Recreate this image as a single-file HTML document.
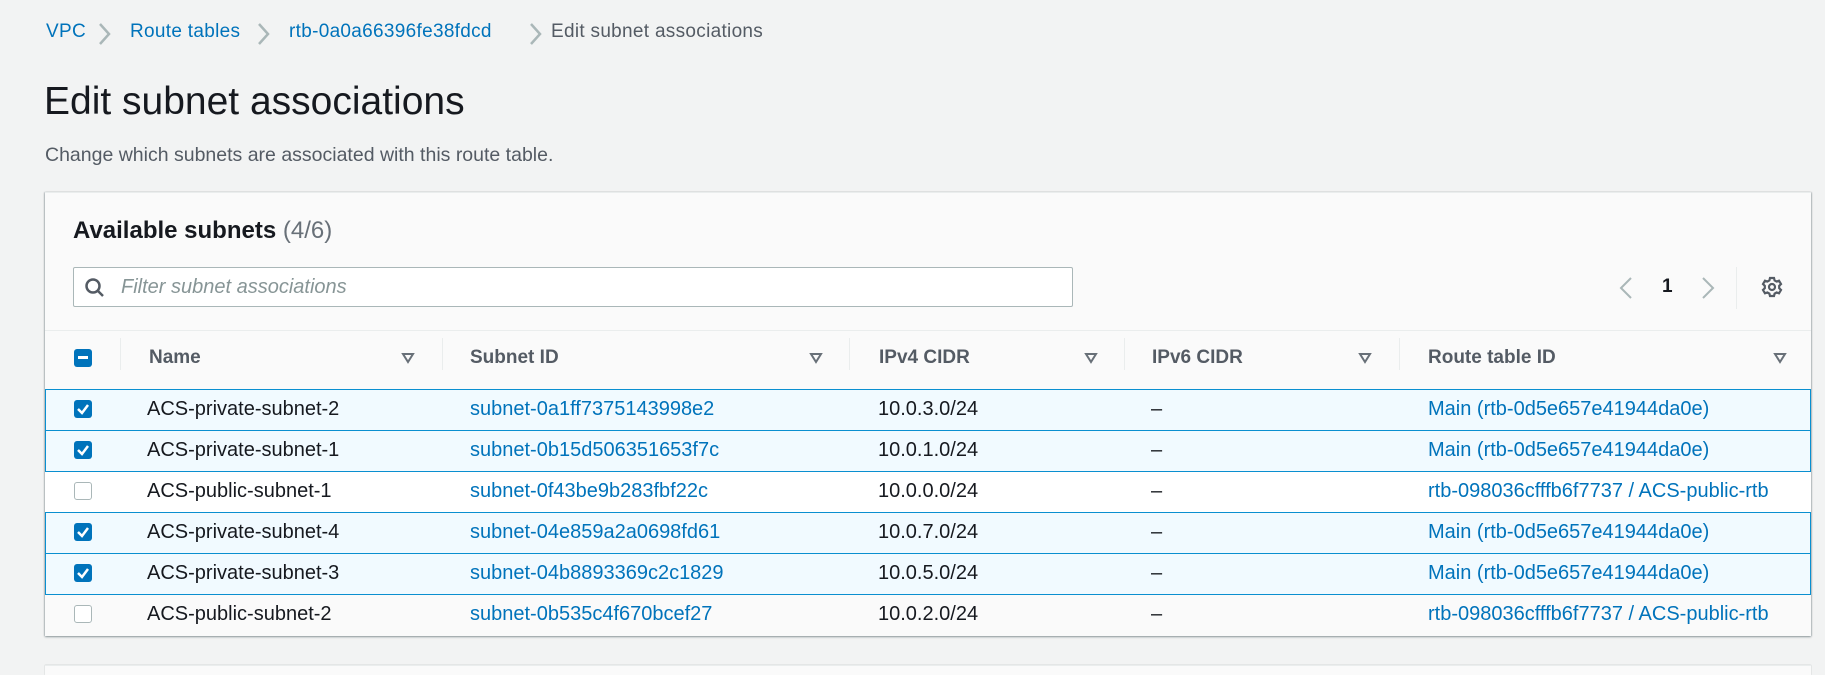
<!DOCTYPE html>
<html><head><meta charset="utf-8"><style>
*{margin:0;padding:0;box-sizing:border-box}
body{width:1825px;height:672px;overflow:hidden;background:#f2f3f3;font-family:"Liberation Sans",Arial,sans-serif;color:#16191f;position:relative}
.a{position:absolute;white-space:nowrap}
.lk{color:#0073bb}
.bc{font-size:19px;top:21px;letter-spacing:0.3px}
.hd{font-size:19px;font-weight:bold;color:#545b64;top:347px}
.cell{font-size:20px;line-height:41px}
.row{position:absolute;left:45px;width:1766px;height:42px}
.sel{background:#f1faff;border:1px solid #0a8fd0}
.un{background:#fff;border-top:1px solid #eaeded}
.cb{position:absolute;left:74px;width:18px;height:18px;border-radius:3px}
.cbon{background:#0073bb}
.cboff{background:#fff;border:1.5px solid #aab7b8}
.div{position:absolute;top:338px;width:1px;height:32px;background:#eaeded}
</style></head><body>
<div class="a bc lk" style="left:46px">VPC</div>
<svg class="a" style="left:98px;top:22px" width="14" height="24"><polyline points="2,2 11,12 2,22" fill="none" stroke="#aab7b8" stroke-width="2.5"/></svg>
<div class="a bc lk" style="left:130px">Route tables</div>
<svg class="a" style="left:257px;top:22px" width="14" height="24"><polyline points="2,2 11,12 2,22" fill="none" stroke="#aab7b8" stroke-width="2.5"/></svg>
<div class="a bc lk" style="left:289px">rtb-0a0a66396fe38fdcd</div>
<svg class="a" style="left:529px;top:22px" width="14" height="24"><polyline points="2,2 11,12 2,22" fill="none" stroke="#aab7b8" stroke-width="2.5"/></svg>
<div class="a bc" style="left:551px;color:#545b64">Edit subnet associations</div>

<div class="a" style="left:44px;top:80px;font-size:39px">Edit subnet associations</div>
<div class="a" style="left:45px;top:144px;font-size:19.5px;color:#545b64">Change which subnets are associated with this route table.</div>

<div class="a" style="left:45px;top:192px;width:1766px;height:444px;background:#fafafa;border-top:1px solid #eaeded;box-shadow:0 1px 2px rgba(0,28,36,.4),1px 0 1px rgba(0,28,36,.15),-1px 0 1px rgba(0,28,36,.15)"></div>
<div class="a" style="left:73px;top:217px;font-size:24px"><b>Available subnets</b> <span style="color:#687078">(4/6)</span></div>
<div class="a" style="left:73px;top:267px;width:1000px;height:40px;background:#fff;border:1px solid #aab7b8;border-radius:2px"></div>
<svg class="a" style="left:84px;top:277px" width="22" height="22"><circle cx="9" cy="9" r="6.5" fill="none" stroke="#545b64" stroke-width="2.5"/><line x1="14" y1="14" x2="19" y2="19" stroke="#545b64" stroke-width="2.5"/></svg>
<div class="a" style="left:121px;top:276px;font-size:20px;font-style:italic;color:#879596">Filter subnet associations</div>
<svg class="a" style="left:1619px;top:276px" width="14" height="24"><polyline points="12,2 2,12 12,22" fill="none" stroke="#aab7b8" stroke-width="2"/></svg>
<div class="a" style="left:1662px;top:276px;font-size:19px;font-weight:bold">1</div>
<svg class="a" style="left:1701px;top:276px" width="14" height="24"><polyline points="2,2 12,12 2,22" fill="none" stroke="#aab7b8" stroke-width="2"/></svg>
<div class="a" style="left:1736px;top:267px;width:1px;height:42px;background:#eaeded"></div>
<svg class="a" style="left:1761px;top:276px" width="22" height="22" viewBox="0 0 22 22"><g stroke="#545b64" stroke-width="2.2" fill="none"><circle cx="11" cy="11" r="3"/><path d="M9 2h4l.6 2.4 2 1.1 2.4-.8 2 3.4-1.8 1.7v2.4l1.8 1.7-2 3.4-2.4-.8-2 1.1L13 20H9l-.6-2.4-2-1.1-2.4.8-2-3.4 1.8-1.7V9.8L2 8.1l2-3.4 2.4.8 2-1.1z"/></g></svg>

<div class="a" style="left:45px;top:330px;width:1766px;height:1px;background:#eaeded"></div>
<div class="cb cbon" style="top:349px"><div style="position:absolute;left:4px;top:7px;width:10px;height:3px;background:#fff"></div></div>
<div class="div" style="left:120px"></div>
<div class="a hd" style="left:149px">Name</div>
<div class="div" style="left:442px"></div>
<div class="a hd" style="left:470px">Subnet ID</div>
<div class="div" style="left:849px"></div>
<div class="a hd" style="left:879px">IPv4 CIDR</div>
<div class="div" style="left:1124px"></div>
<div class="a hd" style="left:1152px">IPv6 CIDR</div>
<div class="div" style="left:1399px"></div>
<div class="a hd" style="left:1428px">Route table ID</div>
<svg class="a" style="left:401px;top:352px" width="14" height="12"><polygon points="2,2 12,2 7,10" fill="none" stroke="#687078" stroke-width="2"/></svg>
<svg class="a" style="left:809px;top:352px" width="14" height="12"><polygon points="2,2 12,2 7,10" fill="none" stroke="#687078" stroke-width="2"/></svg>
<svg class="a" style="left:1084px;top:352px" width="14" height="12"><polygon points="2,2 12,2 7,10" fill="none" stroke="#687078" stroke-width="2"/></svg>
<svg class="a" style="left:1358px;top:352px" width="14" height="12"><polygon points="2,2 12,2 7,10" fill="none" stroke="#687078" stroke-width="2"/></svg>
<svg class="a" style="left:1773px;top:352px" width="14" height="12"><polygon points="2,2 12,2 7,10" fill="none" stroke="#687078" stroke-width="2"/></svg>

<div class="row un" style="top:471px"></div>
<div class="row un" style="top:594px;height:42px;background:#fafafa"></div>
<div class="row sel" style="top:389px"></div>
<div class="row sel" style="top:430px"></div>
<div class="row sel" style="top:512px"></div>
<div class="row sel" style="top:553px"></div>

<svg width="0" height="0" style="position:absolute"><defs><symbol id="ck" viewBox="0 0 18 18"><rect width="18" height="18" rx="3" fill="#0073bb"/><polyline points="4,9 8,13 14,5" fill="none" stroke="#fff" stroke-width="2.5"/></symbol></defs></svg>
<svg class="a" style="left:74px;top:400px" width="18" height="18"><use href="#ck"/></svg>
<svg class="a" style="left:74px;top:441px" width="18" height="18"><use href="#ck"/></svg>
<div class="cb cboff" style="top:482px"></div>
<svg class="a" style="left:74px;top:523px" width="18" height="18"><use href="#ck"/></svg>
<svg class="a" style="left:74px;top:564px" width="18" height="18"><use href="#ck"/></svg>
<div class="cb cboff" style="top:605px"></div>

<div class="a cell" style="left:147px;top:389px">ACS-private-subnet-2</div>
<div class="a cell lk" style="left:470px;top:389px">subnet-0a1ff7375143998e2</div>
<div class="a cell" style="left:878px;top:389px">10.0.3.0/24</div>
<div class="a cell" style="left:1151px;top:389px">–</div>
<div class="a cell lk" style="left:1428px;top:389px">Main (rtb-0d5e657e41944da0e)</div>

<div class="a cell" style="left:147px;top:430px">ACS-private-subnet-1</div>
<div class="a cell lk" style="left:470px;top:430px">subnet-0b15d506351653f7c</div>
<div class="a cell" style="left:878px;top:430px">10.0.1.0/24</div>
<div class="a cell" style="left:1151px;top:430px">–</div>
<div class="a cell lk" style="left:1428px;top:430px">Main (rtb-0d5e657e41944da0e)</div>

<div class="a cell" style="left:147px;top:471px">ACS-public-subnet-1</div>
<div class="a cell lk" style="left:470px;top:471px">subnet-0f43be9b283fbf22c</div>
<div class="a cell" style="left:878px;top:471px">10.0.0.0/24</div>
<div class="a cell" style="left:1151px;top:471px">–</div>
<div class="a cell lk" style="left:1428px;top:471px">rtb-098036cfffb6f7737 / ACS-public-rtb</div>

<div class="a cell" style="left:147px;top:512px">ACS-private-subnet-4</div>
<div class="a cell lk" style="left:470px;top:512px">subnet-04e859a2a0698fd61</div>
<div class="a cell" style="left:878px;top:512px">10.0.7.0/24</div>
<div class="a cell" style="left:1151px;top:512px">–</div>
<div class="a cell lk" style="left:1428px;top:512px">Main (rtb-0d5e657e41944da0e)</div>

<div class="a cell" style="left:147px;top:553px">ACS-private-subnet-3</div>
<div class="a cell lk" style="left:470px;top:553px">subnet-04b8893369c2c1829</div>
<div class="a cell" style="left:878px;top:553px">10.0.5.0/24</div>
<div class="a cell" style="left:1151px;top:553px">–</div>
<div class="a cell lk" style="left:1428px;top:553px">Main (rtb-0d5e657e41944da0e)</div>

<div class="a cell" style="left:147px;top:594px">ACS-public-subnet-2</div>
<div class="a cell lk" style="left:470px;top:594px">subnet-0b535c4f670bcef27</div>
<div class="a cell" style="left:878px;top:594px">10.0.2.0/24</div>
<div class="a cell" style="left:1151px;top:594px">–</div>
<div class="a cell lk" style="left:1428px;top:594px">rtb-098036cfffb6f7737 / ACS-public-rtb</div>

<div class="a" style="left:45px;top:665px;width:1766px;height:10px;background:#fafafa;border-top:1px solid #eaeded;box-shadow:0 0 1px rgba(0,28,36,.3)"></div>
</body></html>
